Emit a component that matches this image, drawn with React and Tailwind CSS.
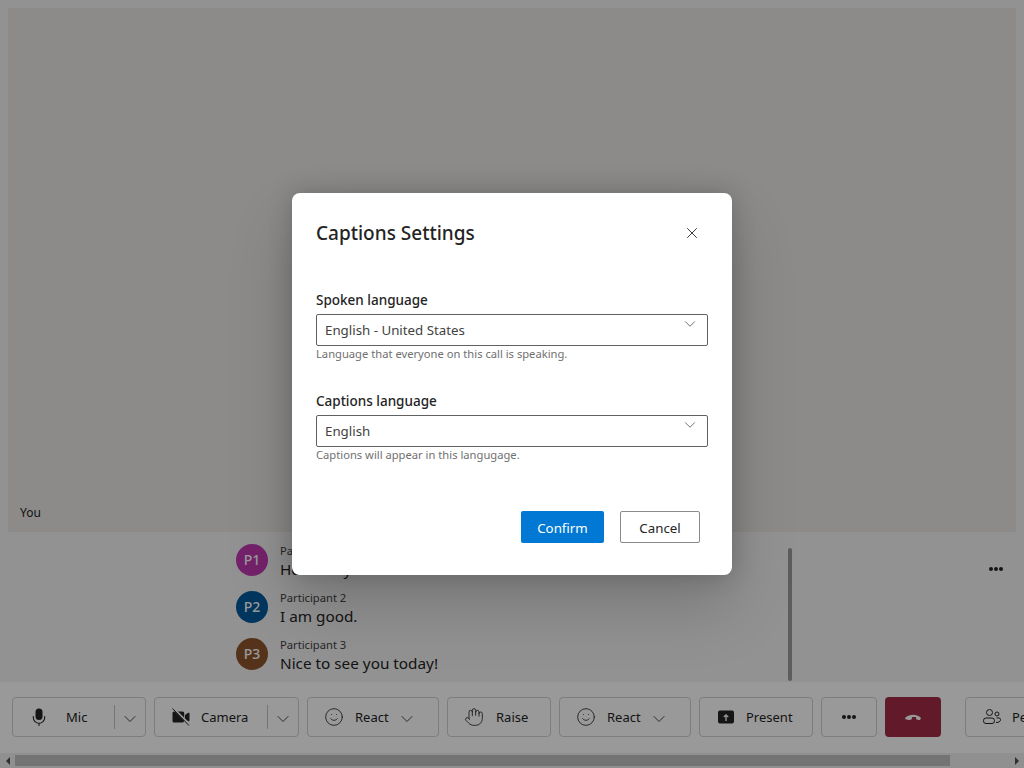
import { ChevronDown, X, Smile, Hand } from 'lucide-react'

const font = { fontFamily: '"Noto Sans", "Open Sans", sans-serif' }

function MicIcon() {
  return (
    <svg width="20" height="20" viewBox="0 0 20 20" fill="none">
      <rect x="6.500" y="1.500" width="7" height="11.500" rx="3.500" fill="#242424" />
      <path d="M4.300 9.500v1a5.700 5.700 0 0 0 11.400 0v-1M10 16.200V18.500" stroke="#242424" strokeWidth="1.100" strokeLinecap="round" />
    </svg>
  )
}

function CameraOffIcon() {
  return (
    <svg width="20" height="20" viewBox="0 0 20 20" fill="none">
      <path d="M3 4.500h8.500a1.700 1.700 0 0 1 1.700 1.700v7.600a1.700 1.700 0 0 1-1.700 1.700H3a1.500 1.500 0 0 1-1.500-1.500V6A1.500 1.500 0 0 1 3 4.500zM14 8l3.200-2.200c.6-.4 1.300 0 1.300.7v7c0 .7-.7 1.100-1.300.7L14 12z" fill="#242424" />
      <path d="M2.500 1.500l16 16" stroke="#fff" strokeWidth="2.200" />
      <path d="M1.500 1.500l16.500 17" stroke="#242424" strokeWidth="1" />
    </svg>
  )
}

function PresentIcon() {
  return (
    <svg width="20" height="20" viewBox="0 0 20 20" fill="none">
      <rect x="2" y="3.500" width="16" height="13" rx="2" fill="#242424" />
      <path d="M10 14V8M7.800 10L10 7.800l2.200 2.200" stroke="#fff" strokeWidth="1.300" />
    </svg>
  )
}

function HangUpIcon() {
  return (
    <svg width="20" height="20" viewBox="0 0 20 20" fill="none">
      <path d="M2.500 12.200c-.5-.6-.4-1.400.2-1.900C4.600 8.700 7.200 7.800 10 7.800s5.400.9 7.300 2.500c.6.500.7 1.300.2 1.900l-.5.6c-.4.400-1 .5-1.500.3l-1.600-.6c-.5-.2-.8-.6-.8-1.100v-1.200c-1.400-.4-2.800-.4-4.200 0v1.200c0 .5-.3.9-.8 1.100l-1.600.6c-.5.2-1.100.1-1.500-.3z" fill="#fff" />
    </svg>
  )
}

function PeopleIcon() {
  return (
    <svg width="20" height="20" viewBox="0 0 20 20" fill="none" stroke="#242424" strokeWidth="1">
      <circle cx="7.500" cy="5.500" r="3" />
      <circle cx="15" cy="7" r="2" />
      <rect x="1.500" y="11" width="11" height="5.500" rx="2.500" />
      <path d="M14.500 11h2.500a1.500 1.500 0 0 1 1.500 1.500c0 2-1.500 3-4.500 3" />
    </svg>
  )
}

function Dots() {
  return (
    <span className="flex gap-[1px]">
      <span className="w-[4px] h-[4px] rounded-full bg-[#242424]" />
      <span className="w-[4px] h-[4px] rounded-full bg-[#242424]" />
      <span className="w-[4px] h-[4px] rounded-full bg-[#242424]" />
    </span>
  )
}

function Chevron() {
  return <ChevronDown size={20} strokeWidth={1} className="text-[#242424] mt-[3px]" />
}

function ToolButton({ className, children }) {
  return (
    <div className={`h-10 shrink-0 flex items-center rounded border border-[#d1d1d1] bg-white text-[13px] text-[#242424] ${className}`}>
      {children}
    </div>
  )
}

function Message({ color, initials, name, text }) {
  return (
    <div className="flex items-center gap-3 h-8 mb-[15px]">
      <div className="w-8 h-8 rounded-full flex items-center justify-center text-sm font-medium text-white" style={{ backgroundColor: color }}>
        {initials}
      </div>
      <div className="flex flex-col mt-[2px]">
        <span className="text-[11.200px] leading-4 text-[#424242]">{name}</span>
        <span className="text-[15.300px] leading-[22px] text-[#242424] -mt-[1px]">{text}</span>
      </div>
    </div>
  )
}

function SelectField({ label, value, hint, className }) {
  return (
    <div className={className}>
      <div className="text-[13.500px] leading-5 font-medium text-[#242424]">{label}</div>
      <div className="mt-[4px] h-8 flex justify-between rounded-[2px] border border-[#616161] pl-2 pr-[8px]">
        <span className="text-[13.300px] leading-[30px] text-[#424242]">{value}</span>
        <ChevronDown size={18} strokeWidth={1} className="text-[#424242]" />
      </div>
      <div className="text-[11.200px] leading-4 text-[#707070]">{hint}</div>
    </div>
  )
}

export default function App() {
  return (
    <div className="relative w-[1024px] h-[768px] overflow-hidden flex flex-col bg-[#f3f3f3]" style={font}>
      <div className="h-[532px] p-2 pb-0 shrink-0">
        <div className="h-full bg-[#e9e8e5] flex items-end pl-3 pb-[9px]">
          <span className="text-xs leading-5 text-[#242424]">You</span>
        </div>
      </div>

      <div className="h-[150px] shrink-0 flex">
        <div className="w-[552px] ml-[236px] pt-[12px] pr-4">
          <Message color="#c239b3" initials="P1" name="Participant 1" text="How are you?" />
          <Message color="#005a9e" initials="P2" name="Participant 2" text="I am good." />
          <Message color="#8e562e" initials="P3" name="Participant 3" text="Nice to see you today!" />
        </div>
        <div className="w-1 h-[133px] mt-[16px] rounded-full bg-[#9b9b9b]" />
        <div className="ml-[197px] mt-[35px] h-1"><Dots /></div>
      </div>

      <div className="h-[71px] shrink-0 bg-white flex items-start gap-2 pl-3 pt-[15px] overflow-hidden">
        <ToolButton className="w-[134px]">
          <span className="ml-[16px]"><MicIcon /></span>
          <span className="ml-[17px] w-[48px] pt-[2px]">Mic</span>
          <span className="w-px h-6 bg-[#c4c4c4]" />
          <span className="ml-[5px]"><Chevron /></span>
        </ToolButton>
        <ToolButton className="w-[145px]">
          <span className="ml-[16px]"><CameraOffIcon /></span>
          <span className="ml-[10px] w-[66px] pt-[2px]">Camera</span>
          <span className="w-px h-6 bg-[#c4c4c4]" />
          <span className="ml-[5px]"><Chevron /></span>
        </ToolButton>
        <ToolButton className="w-[132px]">
          <Smile size={20} strokeWidth={1} className="ml-[16px] text-[#242424]" />
          <span className="ml-[11px] w-[42px] pt-[2px]">React</span>
          <Chevron />
        </ToolButton>
        <ToolButton className="w-[104px]">
          <Hand size={20} strokeWidth={1} className="ml-[16px] text-[#242424]" />
          <span className="ml-[12px] pt-[2px]">Raise</span>
        </ToolButton>
        <ToolButton className="w-[132px]">
          <Smile size={20} strokeWidth={1} className="ml-[16px] text-[#242424]" />
          <span className="ml-[11px] w-[42px] pt-[2px]">React</span>
          <Chevron />
        </ToolButton>
        <ToolButton className="w-[114px]">
          <span className="ml-[16px]"><PresentIcon /></span>
          <span className="ml-[10px] pt-[2px]">Present</span>
        </ToolButton>
        <ToolButton className="w-[56px] justify-center"><Dots /></ToolButton>
        <div className="w-[56px] h-10 shrink-0 flex items-center justify-center rounded bg-[#a32c46]"><HangUpIcon /></div>
        <ToolButton className="w-[120px] ml-4">
          <span className="ml-[16px]"><PeopleIcon /></span>
          <span className="ml-[10px] pt-[2px]">People</span>
        </ToolButton>
      </div>

      <div className="h-[15px] shrink-0 flex items-center bg-[#f1f1f1]">
        <span className="w-[15px] flex justify-center">
          <span className="border-y-[4px] border-y-transparent border-r-[4px] border-r-[#505050]" />
        </span>
        <div className="w-[935px] h-[11px] bg-[#c1c1c1]" />
        <span className="ml-auto w-[15px] flex justify-center">
          <span className="border-y-[4px] border-y-transparent border-l-[4px] border-l-[#505050]" />
        </span>
      </div>

      {/* scrim + dialog */}
      <div className="absolute inset-0 bg-black/40 flex items-start justify-center pt-[193px]">
        <div className="w-[440px] h-[382px] bg-white rounded-lg px-6 pt-6 shadow-[0_0_24px_rgba(0,0,0,0.2),0_32px_64px_rgba(0,0,0,0.18)]">
          <div className="flex items-center justify-between h-8">
            <h2 className="text-[19px] font-medium text-[#242424]">Captions Settings</h2>
            <X size={18} strokeWidth={1.200} className="text-[#242424] mr-[7px]" />
          </div>
          <SelectField className="mt-[41px]" label="Spoken language" value="English - United States" hint="Language that everyone on this call is speaking." />
          <SelectField className="mt-[29px]" label="Captions language" value="English" hint="Captions will appear in this langugage." />
          <div className="flex justify-end gap-4 mt-[48px] pr-2">
            <button className="w-[83px] h-8 pt-[4px] rounded-[2px] bg-[#0078d4] text-[13.300px] text-white">Confirm</button>
            <button className="w-[80px] h-8 pt-[3px] rounded-[2px] border border-[#8a8a8a] bg-white text-[13.300px] text-[#242424]">Cancel</button>
          </div>
        </div>
      </div>
    </div>
  )
}
